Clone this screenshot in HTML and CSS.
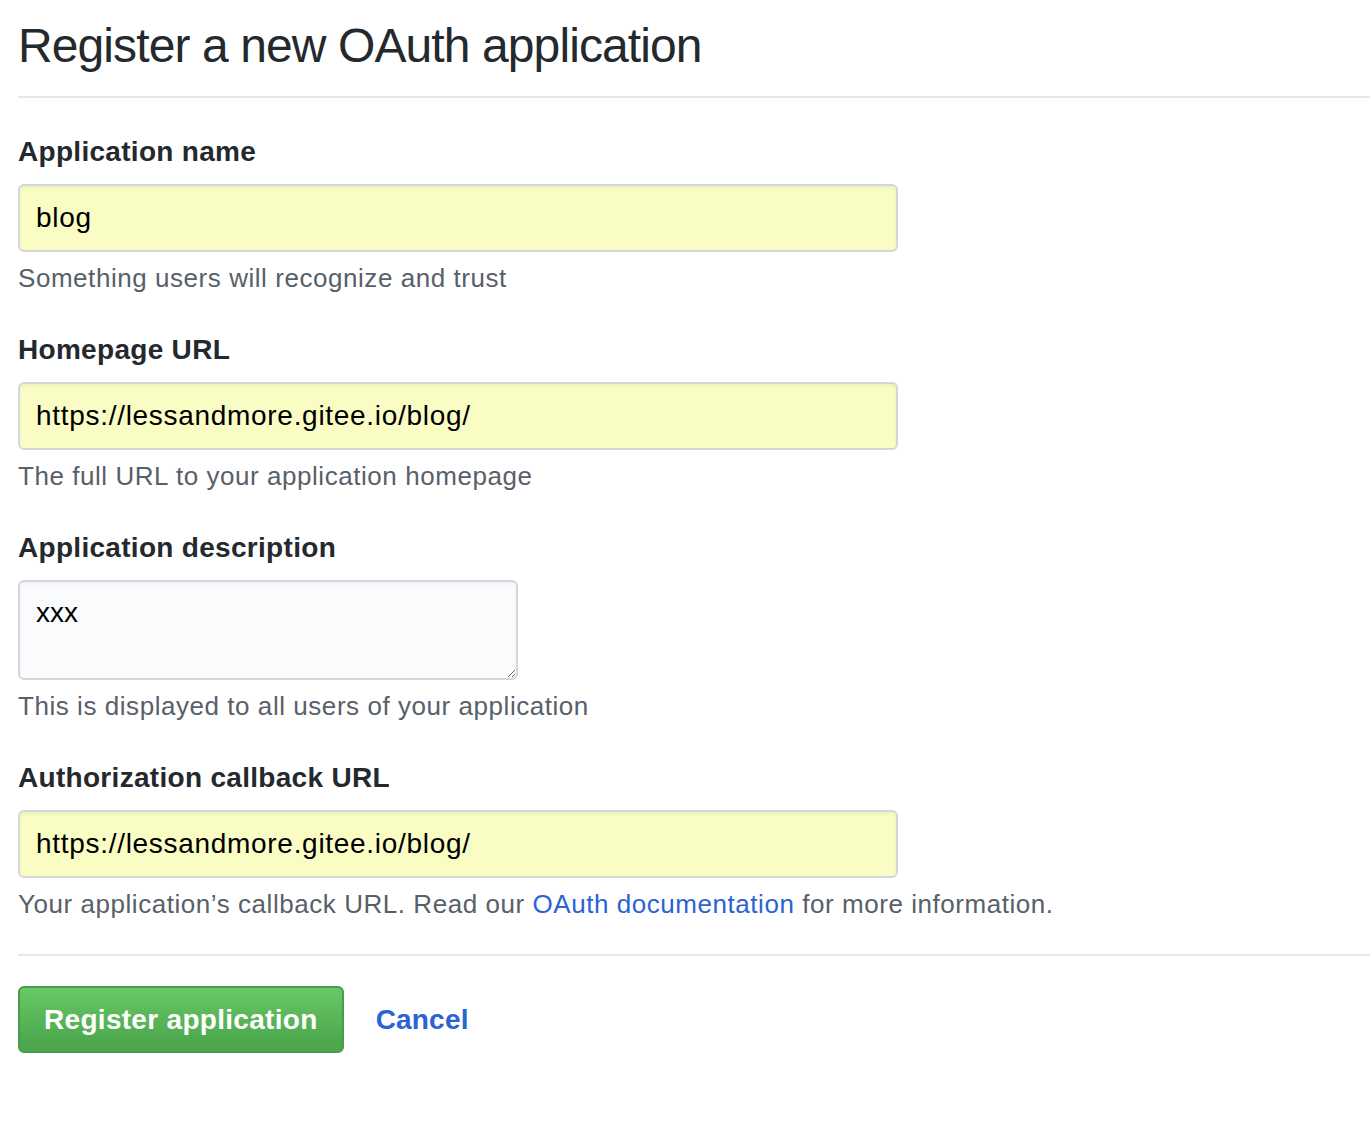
FILE: index.html
```html
<!DOCTYPE html>
<html>
<head>
<meta charset="utf-8">
<link rel="stylesheet" href="styles.css">
</head>
<body>
<div class="page">
  <div class="subhead">
    <h1 class="subhead-heading">Register a new OAuth application</h1>
  </div>
  <form class="form">
    <div class="form-group">
      <label class="label">Application name</label>
      <input class="input autofill" type="text" value="blog">
      <p class="note">Something users will recognize and trust</p>
    </div>
    <div class="form-group">
      <label class="label">Homepage URL</label>
      <input class="input autofill" type="text" value="https://lessandmore.gitee.io/blog/">
      <p class="note">The full URL to your application homepage</p>
    </div>
    <div class="form-group">
      <label class="label">Application description</label>
      <textarea class="textarea">xxx</textarea>
      <p class="note">This is displayed to all users of your application</p>
    </div>
    <div class="form-group">
      <label class="label">Authorization callback URL</label>
      <input class="input autofill" type="text" value="https://lessandmore.gitee.io/blog/">
      <p class="note">Your application’s callback URL. Read our <a class="link" href="#">OAuth documentation</a> for more information.</p>
    </div>
    <div class="divider"></div>
    <div class="actions">
      <button type="button" class="btn-primary">Register application</button>
      <a class="cancel" href="#">Cancel</a>
    </div>
  </form>
</div>
</body>
</html>
```

FILE: styles.css
```css
html, body {
  margin: 0;
  padding: 0;
  background: #ffffff;
}

body {
  font-family: "Liberation Sans", Arial, sans-serif;
  color: #24292e;
}

.page {
  padding: 16px 0 0 18px;
}

.subhead {
  padding-bottom: 20px;
  border-bottom: 2px solid #e4e6ea;
  margin-bottom: 32px;
}

.subhead-heading {
  margin: 0;
  font-size: 48px;
  line-height: 60px;
  font-weight: 400;
  letter-spacing: -0.9px;
  color: #24292e;
}

.form {
  margin: 0;
}

.form-group {
  margin-bottom: 30px;
  display: flex;
  flex-direction: column;
  align-items: flex-start;
}

.label {
  padding-top: 1px;
  font-size: 28px;
  line-height: 42px;
  font-weight: 700;
  letter-spacing: 0.3px;
  color: #24292e;
  margin-bottom: 11px;
}

.input {
  box-sizing: border-box;
  width: 880px;
  height: 68px;
  padding: 0 16px;
  font-family: "Liberation Sans", Arial, sans-serif;
  font-size: 28px;
  letter-spacing: 0.7px;
  color: #000000;
  border: 2px solid #d3d6dc;
  border-radius: 6px;
  box-shadow: inset 0 2px 3px rgba(27, 31, 35, 0.05);
  outline: none;
}

.autofill {
  background: #f9fcc3;
}

.textarea {
  box-sizing: border-box;
  width: 500px;
  height: 100px;
  padding: 15px 16px;
  font-family: "Liberation Sans", Arial, sans-serif;
  font-size: 28px;
  color: #000000;
  background: #fafbfc;
  border: 2px solid #d3d6dc;
  border-radius: 6px;
  box-shadow: inset 0 2px 3px rgba(27, 31, 35, 0.05);
  outline: none;
  resize: vertical;
}

.note {
  margin: 7px 0 0 0;
  font-size: 26px;
  line-height: 39px;
  letter-spacing: 0.55px;
  color: #586069;
}

.link {
  color: #2a64d2;
  text-decoration: none;
}

.divider {
  height: 2px;
  background: #e6e8eb;
  margin: 0 0 30px 0;
}

.actions {
  display: flex;
  align-items: center;
  gap: 32px;
}

.btn-primary {
  box-sizing: border-box;
  height: 67px;
  padding: 0 24px;
  font-family: "Liberation Sans", Arial, sans-serif;
  font-size: 28px;
  font-weight: 700;
  letter-spacing: 0.3px;
  color: #ffffff;
  background-image: linear-gradient(180deg, #68c866 0%, #4ba64c 90%);
  border: 2px solid #4c9a4d;
  border-radius: 6px;
  cursor: pointer;
}

.cancel {
  font-size: 28px;
  font-weight: 700;
  letter-spacing: 0.2px;
  color: #2a64d2;
  text-decoration: none;
}
```
